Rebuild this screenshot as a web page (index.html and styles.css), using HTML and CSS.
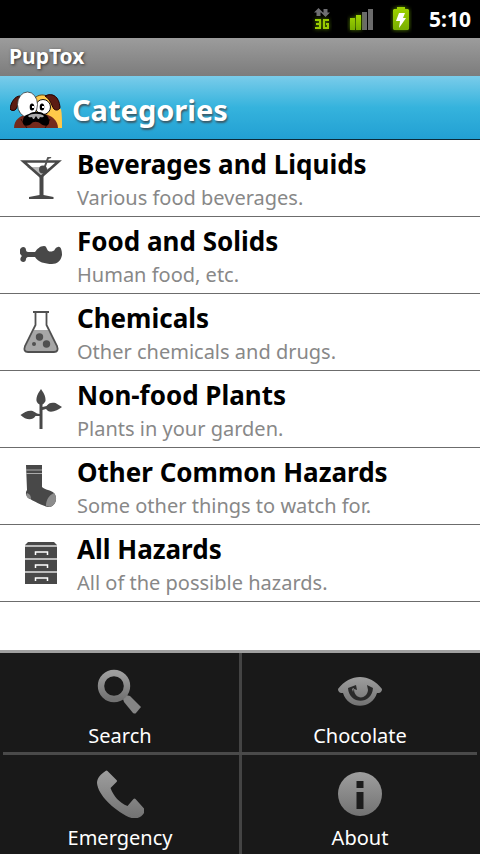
FILE: index.html
```html
<!DOCTYPE html>
<html lang="en">
<head>
<meta charset="utf-8">
<meta name="viewport" content="width=device-width, initial-scale=1">
<title>PupTox</title>
<link rel="stylesheet" href="styles.css">
</head>
<body>
<svg class="defs" aria-hidden="true">
  <defs>
    <linearGradient id="steel" x1="0" y1="0" x2="0" y2="1">
      <stop offset="0" stop-color="#9e9e9e"/>
      <stop offset="1" stop-color="#727272"/>
    </linearGradient>
    <linearGradient id="lime" x1="0" y1="0" x2="0" y2="1">
      <stop offset="0" stop-color="#9fd400"/>
      <stop offset="1" stop-color="#78ae00"/>
    </linearGradient>
  </defs>
</svg>
<div class="screen">
  <div class="status">
    <svg width="20" height="28" viewBox="0 0 20 28" role="img" aria-label="3G data">
      <path d="M6.500 3l4.500 4.500H8.500V11h-4V7.500H2zM13.500 12L9 7.500h2.500V4h4v3.500H18z" fill="#6f6f73"/>
      <path class="glow" d="M3 15h5v8H3M4 19h4M17 15h-5v8h4v-4h-2" fill="none" stroke="#98cc00" stroke-width="2"/>
    </svg>
    <svg width="28" height="28" viewBox="0 0 28 28" role="img" aria-label="Signal strength">
      <path d="M15 7h5v18h-5zM21 4h5v21h-5z" fill="#6b6b6b"/>
      <path class="glow" d="M3 13h5v12H3zM9 10h5v15H9z" fill="url(#lime)"/>
    </svg>
    <svg width="22" height="28" viewBox="0 0 22 28" role="img" aria-label="Battery charging">
      <path class="glow" d="M7 2h8v2h3l1 1v19l-1 1H4l-1-1V5l1-1h3z" fill="url(#lime)"/>
      <path d="M9 8h6l-2 5h3l-7 10 1-7H6z" fill="#fff"/>
    </svg>
    <span class="clock">5:10</span>
  </div>
  <div class="titlebar">PupTox</div>
  <header class="header">
    <svg width="54" height="38" viewBox="0 0 54 38" aria-hidden="true">
      <path d="M24 8c4-5 11-5 15-1l4 9c2 2 6 1 8 2 1 5 1 12 1 19H28z" fill="#ffc94a"/>
      <path d="M24 8c4-5 10-5 15-2" fill="none" stroke="#6a4a10"/>
      <path d="M10 5C5 5 1 11 0 18c1 2 5 2 6 0 2-3 3-8 4-13z" fill="#5c1c12" stroke="#200"/>
      <path d="M35 5c8-4 14 1 15 11 0 3-4 4-6 2-3-4-3-9-9-13z" fill="#5c1c12" stroke="#200"/>
      <path d="M4 37c0-8 6-13 15-14h15c8 1 14 7 14 14z" fill="#742a1c"/>
      <path d="M17 37c-2-3-4-5-6-9M35 37c2-3 3-5 5-9" fill="none" stroke="#2c0a04"/>
      <circle cx="33" cy="16" r="7.500" fill="#fff" stroke="#111"/>
      <ellipse cx="17.500" cy="13.500" rx="10" ry="12.500" fill="#fff" stroke="#333" stroke-width=".8"/>
      <ellipse cx="22" cy="16" rx="2.300" ry="3.500"/>
      <ellipse cx="32" cy="16" rx="2.300" ry="3.500"/>
      <path d="M22 15h2v2h-2zM32 15h2v2h-2z" fill="#fff"/>
      <path d="M19 23c4-3 12-3 15 0 3 1 5 3 5 7 1 5-4 6-8 3-3-3-8-3-10 0-4 3-9 2-8-3 0-4 2-6 6-7z"/>
      <path d="M18 25c3-3 13-3 16 0-1 2-3 1-4 1l-1 2h-1l-2-3-2 3h-1l-1-2c-1 0-3 1-4-1z" fill="#aaa"/>
    </svg>
    <h1>Categories</h1>
  </header>
  <ul class="list">
    <li><a class="row" href="#beverages">
      <svg class="icon" viewBox="0 0 42 42" aria-hidden="true">
        <path d="M7 10h15l3 2 6-1-10 8z" fill="#b8b8b8"/>
        <path d="M3.500 4.500h35L21 20z" fill="none" stroke="#484848" stroke-width="2.600"/>
        <path d="M24 12l4-11 3-1" fill="none" stroke="#555" stroke-width="2"/>
        <circle cx="23" cy="12.500" r="4" fill="#484848"/>
        <path d="M19.500 18h4v20l10 2v2H9v-2l10.500-2z" fill="#484848"/>
      </svg>
      <span class="text"><span class="name">Beverages and Liquids</span><span class="note">Various food beverages.</span></span></a></li>
    <li><a class="row" href="#food">
      <svg class="icon" viewBox="0 0 42 42" aria-hidden="true">
        <path d="M1 14c2-2 5-1 5 2 0 1 1 2 2 2h7c2-3 5-6 9-6 2 0 2 1 3 3 1 3 4 3 6 2 2 0 2-4 5-4 3-1 4 4 4 8-1 6-5 9-10 9-7 0-14-2-17-7H8c-1 0-2 1-2 2 0 3-3 4-5 2-1-1-1-3 1-5-3-2-3-6-1-8z" fill="#484848"/>
      </svg>
      <span class="text"><span class="name">Food and Solids</span><span class="note">Human food, etc.</span></span></a></li>
    <li><a class="row" href="#chemicals">
      <svg class="icon" viewBox="0 0 42 42" aria-hidden="true">
        <path d="M14 19h14l10 17q1 5-4 5H8q-5 0-3-5z" fill="#a6a6a6"/>
        <path d="M13 1h16M15.500 1v13L5 35q-2 6 3 6h26q5 0 3-6L26.500 14V1" fill="none" stroke="#505050" stroke-width="1.800"/>
        <circle cx="19.500" cy="26" r="3.700" fill="#505050"/>
        <circle cx="26.500" cy="33" r="3.700" fill="#505050"/>
        <circle cx="14" cy="33" r="2" fill="#505050"/>
      </svg>
      <span class="text"><span class="name">Chemicals</span><span class="note">Other chemicals and drugs.</span></span></a></li>
    <li><a class="row" href="#plants">
      <svg class="icon" viewBox="0 0 42 42" aria-hidden="true">
        <path d="M21 1c2 3 5 7 4.500 12-1 2-2 3-3 3.500v2.500l4-1c2-3 5-4 9-3l6.500 4c-4 3-10 6-14 4l-2-2-3.500 1V41h-3V28h-4c-3 5-10 4-15-1 4-3 10-6 14-3 2 1 3 2 5 2v-9.500c-1-.5-2-1-3-3.500-.5-5 2.500-9 4.500-12z" fill="#484848"/>
      </svg>
      <span class="text"><span class="name">Non-food Plants</span><span class="note">Plants in your garden.</span></span></a></li>
    <li><a class="row" href="#hazards">
      <svg class="icon" viewBox="0 0 42 42" aria-hidden="true">
        <path d="M6 0h16v22c3 3 9 3 12 6 4 5 2 12-4 14-4 1-16-6-22-9-2-3-3-5-1-8z" fill="#484848"/>
        <path d="M6 5h16M6 8.500h16" stroke="#aaa" stroke-width="1"/>
        <path d="M34 28c4 5 2 12-4 14l-4-1c0-6 3-11 8-13zM7 28c3 1 4 3 4 6l-3-1c-2-2-2-3-1-5z" fill="#8c8c8c"/>
      </svg>
      <span class="text"><span class="name">Other Common Hazards</span><span class="note">Some other things to watch for.</span></span></a></li>
    <li><a class="row" href="#all">
      <svg class="icon" viewBox="0 0 42 42" aria-hidden="true">
        <path d="M8 0h26l3 3H5zM5 5h32v11H5zM5 18h32v11H5zM5 31h32v11H5z" fill="#484848"/>
        <path d="M5 4h32M5 17h32M5 30h32" stroke="#bbb" stroke-width="2"/>
        <path d="M15.500 13v-3h12v3M15.500 26v-3h12v3M15.500 39v-3h12v3" fill="none" stroke="#fff" stroke-width="1.500"/>
      </svg>
      <span class="text"><span class="name">All Hazards</span><span class="note">All of the possible hazards.</span></span></a></li>
  </ul>
  <nav class="menu">
    <button class="item" type="button">
      <svg class="glyph" viewBox="0 0 48 48" aria-hidden="true">
        <path d="M27 31l3-4 4 1 11 11-5 6q-1 1-3 0L28 34z" fill="#858585"/>
        <circle cx="18" cy="18" r="13" fill="none" stroke="url(#steel)" stroke-width="6.400"/>
      </svg>Search</button>
    <button class="item" type="button">
      <svg class="glyph" viewBox="0 0 48 48" aria-hidden="true">
        <path d="M2 21C14 5 34 5 46 21q0 3-3 4h-2C36 42 12 42 7 25H5q-3-1-3-4z" fill="url(#steel)"/>
        <path d="M12 20l8-3 1 5-3-1c0 11 13 11 14 1l-1-5 6 3c-1 17-24 17-25 0z" fill="#2a2a2a"/>
        <path d="M16 21q1-1 2-1l-1 4z" fill="#8a8a8a"/>
      </svg>Chocolate</button>
    <button class="item" type="button">
      <svg class="glyph" viewBox="0 0 48 48" aria-hidden="true">
        <path d="M9.500 1q1-1 2 0l9 9q1 1 0 2l-6 6c3 8 9 15 17 18l6-7q1-1 2 0l9 10q1 1 0 3c-3 6-9 8-16 5C17 39 2 25 1 13 1 8 5 4 9.500 1z" fill="url(#steel)"/>
      </svg>Emergency</button>
    <button class="item" type="button">
      <svg class="glyph" viewBox="0 0 48 48" aria-hidden="true">
        <circle cx="24" cy="24" r="22" fill="url(#steel)"/>
        <path d="M20.500 11h7v7h-7zM20.500 22h7v17h-7z" fill="#1c1c1c"/>
      </svg>About</button>
  </nav>
</div>
</body>
</html>
```
FILE: styles.css
```css
* { box-sizing: border-box; }

body {
  margin: 0;
  font-family: "Noto Sans", "Open Sans", sans-serif;
}

.defs { position: absolute; width: 0; height: 0; }

.screen {
  display: flex;
  flex-direction: column;
  min-height: 100vh;
  background: #fff;
}

.status {
  display: flex;
  align-items: center;
  justify-content: flex-end;
  gap: 15px;
  height: 38px;
  padding-right: 9px;
  background: #000;
  color: #fff;
}

.glow { filter: drop-shadow(0 0 2px #5a8a00); }

.clock {
  margin-left: 2px;
  font-weight: 700;
  font-size: 21px;
}

.titlebar {
  height: 38px;
  padding-left: 9px;
  background: linear-gradient(#9c9c9c, #7c7c7c);
  color: #fff;
  font-weight: 700;
  font-size: 21px;
  line-height: 37px;
  text-shadow: 1px 1px 3px #333;
}

.header {
  display: flex;
  align-items: center;
  gap: 8px;
  height: 64px;
  padding: 4px 10px 0;
  border-bottom: 1px solid #0b2a38;
  background: linear-gradient(#7accea, #35b3dd 50%, #22a0d3);
  color: #fff;
}

h1 {
  margin: 0;
  font-size: 29px;
  line-height: 40px;
  text-shadow: 1px 2px 2px #3a5a68;
}

.list {
  flex: 1;
  margin: 0;
  padding: 0;
  list-style: none;
}

.row {
  display: flex;
  gap: 15px;
  height: 77px;
  padding-left: 20px;
  border-bottom: 1px solid #6c6c6c;
  color: #000;
  text-decoration: none;
}

.icon {
  flex: none;
  width: 42px;
  height: 42px;
  margin-top: 17px;
}

.text {
  display: flex;
  flex-direction: column;
  padding-top: 4px;
}

.name {
  font-weight: 700;
  font-size: 26px;
  line-height: 40px;
}

.note {
  color: #888;
  font-size: 20px;
  line-height: 27px;
}

.menu {
  display: grid;
  grid-template-columns: 1fr 1fr;
  row-gap: 3px;
  border-top: 3px solid #a0a0a0;
  background:
    linear-gradient(#4a4a4a, #4a4a4a) center / calc(100% - 6px) 3px no-repeat,
    linear-gradient(#444, #444) center / 3px 100% no-repeat,
    #191919;
}

.item {
  display: flex;
  flex-direction: column;
  align-items: center;
  height: 99px;
  padding: 15px 0 0;
  border: 0;
  background: none;
  color: #fff;
  font: 20px/28px "Noto Sans", "Open Sans", sans-serif;
}

.glyph {
  width: 48px;
  height: 48px;
  margin-bottom: 6px;
}
```
